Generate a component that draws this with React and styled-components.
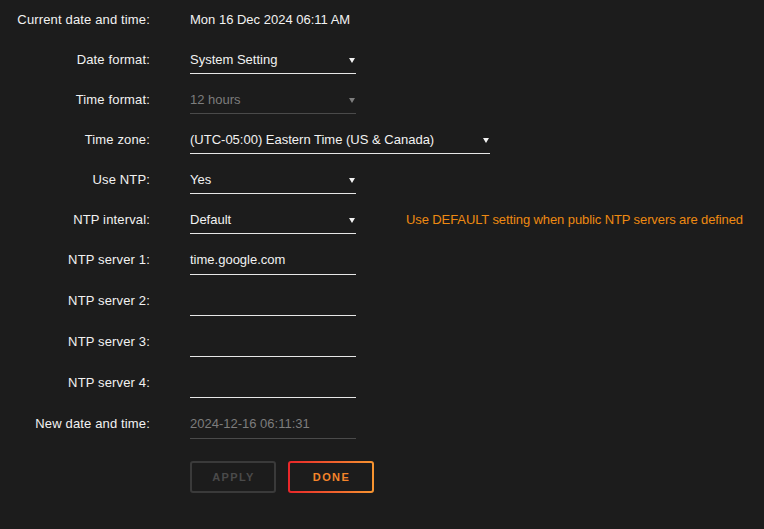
import styled, { createGlobalStyle } from 'styled-components';

const Global = createGlobalStyle`
  html, body {
    margin: 0;
    background: #1c1c1c;
  }
  body {
    font-family: "Liberation Sans", Arial, sans-serif;
    font-size: 13px;
    color: #f2f2f2;
  }
`;

const Page = styled.div`
  min-height: 529px;
  padding-top: 5px;
  display: flex;
  flex-direction: column;
  gap: 11px;
`;

const Row = styled.div`
  display: grid;
  grid-template-columns: 150px auto 1fr;
  column-gap: 40px;
  align-items: start;
`;

const Label = styled.div`
  text-align: right;
  white-space: nowrap;
  line-height: 29px;
  letter-spacing: 0.15px;
  color: #f2f2f2;
`;

const Value = styled.div`
  height: 29px;
  line-height: 30px;
  white-space: nowrap;
`;

const Field = styled.div`
  position: relative;
  width: ${(p) => p.$width || 166}px;
  height: ${(p) => (p.$input ? 29 : 26)}px;
  padding-top: ${(p) => (p.$input ? 0 : 2)}px;
  line-height: ${(p) => (p.$input ? 29 : 26)}px;
  border-bottom: 1px solid ${(p) => (p.$muted ? '#4a4a4a' : '#e6e6e6')};
  color: ${(p) => (p.$muted ? '#7d7d7d' : '#f2f2f2')};
  white-space: nowrap;
`;

const Arrow = styled.span`
  position: absolute;
  right: 1px;
  top: 13px;
  width: 0;
  height: 0;
  border-left: 3px solid transparent;
  border-right: 3px solid transparent;
  border-top: 5px solid ${(p) => (p.$muted ? '#7d7d7d' : '#f2f2f2')};
`;

const Note = styled.div`
  color: #ee8a12;
  margin-left: 10px;
  line-height: 29px;
  letter-spacing: -0.1px;
  white-space: nowrap;
`;

const Buttons = styled.div`
  display: flex;
  gap: 12px;
  margin-top: 11px;
  padding-left: 190px;
`;

const Button = styled.button`
  width: 86px;
  height: 32px;
  box-sizing: border-box;
  border-radius: 3px;
  font-family: "Liberation Sans", Arial, sans-serif;
  font-weight: bold;
  font-size: 11px;
  letter-spacing: 1.4px;
  padding: 0 0 0 1px;
  cursor: pointer;
  background: #1c1c1c;
  color: #4a4a4a;
  border: 2px solid #3a3a3a;
`;

const DoneButton = styled(Button)`
  color: #f5852a;
  border: 2px solid transparent;
  background:
    linear-gradient(#1c1c1c, #1c1c1c) padding-box,
    linear-gradient(90deg, #e8262a, #f79530) border-box;
`;

const SelectRow = ({ label, value, width, muted, note }) => (
  <Row>
    <Label>{label}</Label>
    <Field $width={width} $muted={muted}>
      {value}
      <Arrow $muted={muted} />
    </Field>
    {note ? <Note>{note}</Note> : <span />}
  </Row>
);

const InputRow = ({ label, value, muted }) => (
  <Row>
    <Label>{label}</Label>
    <Field $input $muted={muted}>{value}</Field>
    <span />
  </Row>
);

export default function App() {
  return (
    <>
      <Global />
      <Page>
        <Row>
          <Label>Current date and time:</Label>
          <Value>Mon 16 Dec 2024 06:11 AM</Value>
          <span />
        </Row>
        <SelectRow label="Date format:" value="System Setting" />
        <SelectRow label="Time format:" value="12 hours" muted />
        <SelectRow label="Time zone:" value="(UTC-05:00) Eastern Time (US & Canada)" width={300} />
        <SelectRow label="Use NTP:" value="Yes" />
        <SelectRow
          label="NTP interval:"
          value="Default"
          note="Use DEFAULT setting when public NTP servers are defined"
        />
        <InputRow label="NTP server 1:" value="time.google.com" />
        <InputRow label="NTP server 2:" value="" />
        <InputRow label="NTP server 3:" value="" />
        <InputRow label="NTP server 4:" value="" />
        <InputRow label="New date and time:" value="2024-12-16 06:11:31" muted />
        <Buttons>
          <Button type="button">APPLY</Button>
          <DoneButton type="button">DONE</DoneButton>
        </Buttons>
      </Page>
    </>
  );
}
